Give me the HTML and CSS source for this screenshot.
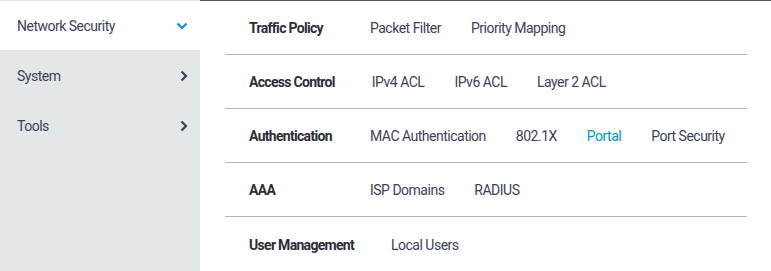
FILE: index.html
```html
<!DOCTYPE html>
<html>
<head>
<meta charset="utf-8">
<link rel="stylesheet" href="styles.css">
</head>
<body>
<div class="app">
  <nav class="sidebar">
    <div class="nav-item active">
      <span>Network Security</span>
      <svg class="chev" width="12" height="8" viewBox="0 0 12 8"><path d="M1.5 1.5 L6 6 L10.5 1.5" fill="none" stroke="#0096d6" stroke-width="2.2"/></svg>
    </div>
    <div class="nav-item">
      <span>System</span>
      <svg class="chev" width="8" height="12" viewBox="0 0 8 12"><path d="M1.5 1.5 L6 6 L1.5 10.5" fill="none" stroke="#3d3f5a" stroke-width="2.2"/></svg>
    </div>
    <div class="nav-item">
      <span>Tools</span>
      <svg class="chev" width="8" height="12" viewBox="0 0 8 12"><path d="M1.5 1.5 L6 6 L1.5 10.5" fill="none" stroke="#3d3f5a" stroke-width="2.2"/></svg>
    </div>
  </nav>
  <main class="panel">
    <div class="row">
      <span class="heading">Traffic Policy</span>
      <div class="links"><a>Packet Filter</a><a>Priority Mapping</a></div>
    </div>
    <div class="row">
      <span class="heading">Access Control</span>
      <div class="links"><a>IPv4 ACL</a><a>IPv6 ACL</a><a>Layer 2 ACL</a></div>
    </div>
    <div class="row">
      <span class="heading">Authentication</span>
      <div class="links"><a>MAC Authentication</a><a>802.1X</a><a class="current">Portal</a><a>Port Security</a></div>
    </div>
    <div class="row">
      <span class="heading">AAA</span>
      <div class="links"><a>ISP Domains</a><a>RADIUS</a></div>
    </div>
    <div class="row last">
      <span class="heading">User Management</span>
      <div class="links"><a>Local Users</a></div>
    </div>
  </main>
</div>
</body>
</html>
```
FILE: styles.css
```css
html, body {
  margin: 0;
  padding: 0;
  background: #fff;
}
body {
  font-family: "Roboto", "Liberation Sans", sans-serif;
  font-size: 14px;
  letter-spacing: -0.5px;
  color: #3c3f5a;
  white-space: nowrap;
}
.app {
  display: flex;
  width: 771px;
  height: 271px;
}
.sidebar {
  width: 200px;
  flex: none;
  background: #e3e7e8;
  padding-top: 1px;
  box-sizing: border-box;
}
.nav-item {
  height: 50px;
  display: flex;
  align-items: center;
  justify-content: space-between;
  padding: 2px 12px 0 17px;
  box-sizing: border-box;
  color: #3c3f5a;
}
.nav-item.active {
  background: #fff;
  height: 49px;
  padding-top: 1px;
}
.chev { display: block; }
.panel {
  flex: 1;
  border-top: 1px solid #555;
  padding: 0 24px 0 25px;
}
.row {
  display: flex;
  align-items: center;
  height: 54px;
  padding-top: 1px;
  padding-left: 24px;
  box-sizing: border-box;
  border-bottom: 1px solid #b5b5b5;
}
.row.last { border-bottom: none; }
.heading {
  font-weight: bold;
  letter-spacing: -0.7px;
  color: #2e2e38;
  min-width: 121px;
  padding-right: 37px;
  box-sizing: border-box;
  flex: none;
}
.links {
  display: flex;
  gap: 30px;
}
.links a {
  color: #3c3f5a;
}
.links a.current { color: #0096d6; }
```
